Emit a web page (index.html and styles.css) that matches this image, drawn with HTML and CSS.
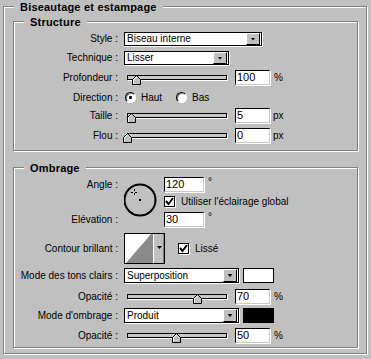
FILE: index.html
```html
<!DOCTYPE html>
<html>
<head>
<meta charset="utf-8">
<link rel="stylesheet" href="styles.css">
</head>
<body>
<div class="panel">
  <div class="group outer">
    <span class="legend">Biseautage et estampage</span>

    <div class="group structure">
      <span class="legend">Structure</span>

      <div class="row h14">
        <span class="label">Style :</span>
        <div class="select w-style"><span class="sel-text">Biseau interne</span><span class="sel-btn"></span></div>
      </div>

      <div class="row h14 mt5">
        <span class="label">Technique :</span>
        <div class="select w-tech"><span class="sel-text">Lisser</span><span class="sel-btn"></span></div>
      </div>

      <div class="row h15 mt5">
        <span class="label">Profondeur :</span>
        <div class="slider"><div class="track"></div>
          <svg class="thumb" style="left:8px" width="9" height="10" viewBox="0 0 9 10"><polygon points="0.5,9.5 0.5,4.5 4.5,0.5 8.5,4.5 8.5,9.5" fill="#c0c0c0" stroke="#000"/><polyline points="1.5,9 1.5,4.9 4.5,1.9" fill="none" stroke="#fff"/></svg>
        </div>
        <div class="field">100</div><span class="unit">%</span>
      </div>

      <div class="row h11 mt7">
        <span class="label">Direction :</span>
        <span class="option first"><span class="radio on"></span><span class="opt-text">Haut</span></span>
        <span class="option"><span class="radio"></span><span class="opt-text">Bas</span></span>
      </div>

      <div class="row h15 mt5">
        <span class="label">Taille :</span>
        <div class="slider"><div class="track"></div>
          <svg class="thumb" style="left:3px" width="9" height="10" viewBox="0 0 9 10"><polygon points="0.5,9.5 0.5,4.5 4.5,0.5 8.5,4.5 8.5,9.5" fill="#c0c0c0" stroke="#000"/><polyline points="1.5,9 1.5,4.9 4.5,1.9" fill="none" stroke="#fff"/></svg>
        </div>
        <div class="field">5</div><span class="unit px">px</span>
      </div>

      <div class="row h15 mt5">
        <span class="label">Flou :</span>
        <div class="slider"><div class="track"></div>
          <svg class="thumb" style="left:-1px" width="9" height="10" viewBox="0 0 9 10"><polygon points="0.5,9.5 0.5,4.5 4.5,0.5 8.5,4.5 8.5,9.5" fill="#c0c0c0" stroke="#000"/><polyline points="1.5,9 1.5,4.9 4.5,1.9" fill="none" stroke="#fff"/></svg>
        </div>
        <div class="field">0</div><span class="unit px">px</span>
      </div>
    </div>

    <div class="group ombrage">
      <span class="legend">Ombrage</span>

      <div class="angle-block">
        <span class="label a-label">Angle :</span>
        <svg class="dial" width="40" height="50" viewBox="0 0 40 50">
          <circle cx="16" cy="23" r="15.5" fill="none" stroke="#000" stroke-width="2"/>
          <rect x="15" y="22" width="2" height="2" fill="#000"/>
          <path d="M7 15.5h2M11 15.5h2M10.5 12v2M10.5 16v2" stroke="#000" stroke-width="1"/>
        </svg>
        <div class="a-input"><div class="field w40">120</div><span class="unit deg">°</span></div>
        <div class="a-check"><span class="checkbox"><svg width="9" height="9" viewBox="0 0 9 9"><polyline points="1,4 3.5,7 8,1" fill="none" stroke="#000" stroke-width="2"/></svg></span><span class="check-text">Utiliser l'éclairage global</span></div>
        <span class="label e-label">Elévation :</span>
        <div class="e-input"><div class="field w40">30</div><span class="unit deg">°</span></div>
      </div>

      <div class="row h31 mt6">
        <span class="label">Contour brillant :</span>
        <svg class="contour" width="41" height="31" viewBox="0 0 41 31">
          <rect x="0.5" y="0.5" width="40" height="30" fill="#fff" stroke="#000"/>
          <polygon points="2,30 27,1 29,1 29,30" fill="#8a8a8a"/>
          <rect x="30" y="1" width="10" height="29" fill="#c0c0c0"/>
          <line x1="29.5" y1="1" x2="29.5" y2="30" stroke="#fff"/>
          <line x1="39.5" y1="1" x2="39.5" y2="30" stroke="#808080"/>
          <polygon points="33,13 38,13 35.5,16" fill="#000"/>
        </svg>
        <span class="checkbox ml13"><svg width="9" height="9" viewBox="0 0 9 9"><polyline points="1,4 3.5,7 8,1" fill="none" stroke="#000" stroke-width="2"/></svg></span>
        <span class="check-text">Lissé</span>
      </div>

      <div class="row h15 mt4">
        <span class="label">Mode des tons clairs :</span>
        <div class="select w-mode"><span class="sel-text">Superposition</span><span class="sel-btn"></span></div>
        <div class="swatch white"></div>
      </div>

      <div class="row h15 mt6">
        <span class="label">Opacité :</span>
        <div class="slider"><div class="track"></div>
          <svg class="thumb" style="left:69px" width="9" height="10" viewBox="0 0 9 10"><polygon points="0.5,9.5 0.5,4.5 4.5,0.5 8.5,4.5 8.5,9.5" fill="#c0c0c0" stroke="#000"/><polyline points="1.5,9 1.5,4.9 4.5,1.9" fill="none" stroke="#fff"/></svg>
        </div>
        <div class="field">70</div><span class="unit">%</span>
      </div>

      <div class="row h15 mt4">
        <span class="label">Mode d'ombrage :</span>
        <div class="select w-mode"><span class="sel-text">Produit</span><span class="sel-btn"></span></div>
        <div class="swatch black"></div>
      </div>

      <div class="row h15 mt5">
        <span class="label">Opacité :</span>
        <div class="slider"><div class="track"></div>
          <svg class="thumb" style="left:48px" width="9" height="10" viewBox="0 0 9 10"><polygon points="0.5,9.5 0.5,4.5 4.5,0.5 8.5,4.5 8.5,9.5" fill="#c0c0c0" stroke="#000"/><polyline points="1.5,9 1.5,4.9 4.5,1.9" fill="none" stroke="#fff"/></svg>
        </div>
        <div class="field">50</div><span class="unit">%</span>
      </div>
    </div>
  </div>
</div>
</body>
</html>
```

FILE: styles.css
```css
* { box-sizing: border-box; }
html, body { margin: 0; padding: 0; }
body {
  background: #c0c0c0;
  width: 371px;
  height: 359px;
  overflow: hidden;
  font-family: "Liberation Sans", Arial, sans-serif;
  font-size: 10px;
  color: #000;
}
.panel { padding: 6px 0 0 3px; }

.group {
  position: relative;
  border: 1px solid #808080;
  box-shadow: inset 1px 1px 0 #fff, 1px 1px 0 #fff;
}
.outer {
  width: 364px;
  height: 348px;
  padding: 14px 8px 5px 9px;
}
.structure {
  height: 130px;
  padding: 10px 0 7px 0;
}
.ombrage {
  margin-top: 16px;
  height: 181px;
  padding: 9px 0 4px 0;
}
.legend {
  position: absolute;
  top: -7px;
  left: 10px;
  padding: 0 6px;
  background: #c0c0c0;
  font-weight: bold;
  font-size: 11px;
  line-height: 14px;
  letter-spacing: 0.2px;
  white-space: nowrap;
}

.row { display: flex; align-items: center; }
.h11 { height: 11px; }
.h14 { height: 14px; }
.h15 { height: 15px; }
.h31 { height: 31px; }
.mt4 { margin-top: 4px; }
.mt5 { margin-top: 5px; }
.mt6 { margin-top: 6px; }
.mt7 { margin-top: 7px; }
.ml13 { margin-left: 13px; }

.label {
  width: 110px;
  padding-right: 6px;
  text-align: right;
  line-height: 12px;
  white-space: nowrap;
  flex: none;
}

/* select */
.select {
  display: flex;
  height: 100%;
  background: #fff;
  border: 1px solid #000;
  box-shadow: 1px 1px 0 #fff;
  flex: none;
}
.w-style { width: 138px; }
.w-tech { width: 105px; }
.w-mode { width: 115px; }
.sel-text {
  flex: 1;
  padding-left: 2px;
  line-height: 12px;
  white-space: nowrap;
  overflow: hidden;
}
.h15 .sel-text { line-height: 13px; }
.sel-btn {
  width: 14px;
  margin: 0 1px 0 0;
  background: #c0c0c0;
  border: 1px solid;
  border-color: #fff #000 #000 #fff;
  display: flex;
  align-items: center;
  justify-content: center;
}
.sel-btn::after {
  content: "";
  width: 5px;
  height: 3px;
  background: #000;
  clip-path: polygon(0 0, 100% 0, 50% 100%);
}

/* slider */
.slider {
  position: relative;
  width: 106px;
  height: 15px;
  display: flex;
  align-items: center;
  flex: none;
}
.track {
  width: 100px;
  height: 5px;
  margin-left: 3px;
  background: #c8c8c8;
  border: 1px solid #000;
  box-shadow: 1px 1px 0 #fff;
}
.thumb {
  position: absolute;
  top: 5px;
}

/* fields */
.field {
  width: 35px;
  height: 15px;
  margin-left: 5px;
  background: #fff;
  border: 1px solid;
  border-color: #000 #c8c8c8 #c8c8c8 #000;
  box-shadow: 1px 1px 0 #fff;
  font-size: 11px;
  line-height: 13px;
  padding-left: 1px;
  flex: none;
}
.w40 { width: 40px; margin-left: 0; }
.unit { margin-left: 4px; line-height: 12px; }
.unit.px { margin-left: 3px; }
.unit.deg { margin-left: 4px; align-self: flex-start; line-height: 10px; }

/* radios */
.option { display: flex; align-items: center; }
.option.first { width: 51px; margin-left: 1px; }
.radio {
  position: relative;
  width: 11px;
  height: 11px;
  border-radius: 50%;
  background: #fff;
  border: 1px solid;
  border-color: #000 #fff #fff #000;
  box-shadow: inset 1px 1px 0 #808080;
  flex: none;
}
.radio.on::after {
  content: "";
  position: absolute;
  left: 3px;
  top: 3px;
  width: 3px;
  height: 3px;
  background: #000;
  border-radius: 1px;
}
.opt-text { margin-left: 5px; line-height: 12px; }

/* checkbox */
.checkbox {
  width: 11px;
  height: 11px;
  background: #fff;
  border: 1px solid #000;
  box-shadow: 1px 1px 0 #fff;
  display: flex;
  flex: none;
}
.check-text { margin-left: 6px; line-height: 12px; white-space: nowrap; }

/* angle block */
.angle-block {
  display: grid;
  grid-template-columns: 110px 40px 1fr;
  grid-template-rows: 15px 4px 11px 5px 15px;
  height: 50px;
}
.a-label { grid-column: 1; grid-row: 1; align-self: center; }
.e-label { grid-column: 1; grid-row: 5; align-self: center; }
.dial { grid-column: 2; grid-row: 1 / 6; }
.a-input { grid-column: 3; grid-row: 1; display: flex; }
.a-check { grid-column: 3; grid-row: 3; display: flex; align-items: center; }
.e-input { grid-column: 3; grid-row: 5; display: flex; }

.contour { flex: none; }

.swatch {
  width: 31px;
  height: 15px;
  margin-left: 4px;
  border: 1px solid #000;
  flex: none;
}
.swatch.white { background: #fff; }
.swatch.black { background: #000; }
```
